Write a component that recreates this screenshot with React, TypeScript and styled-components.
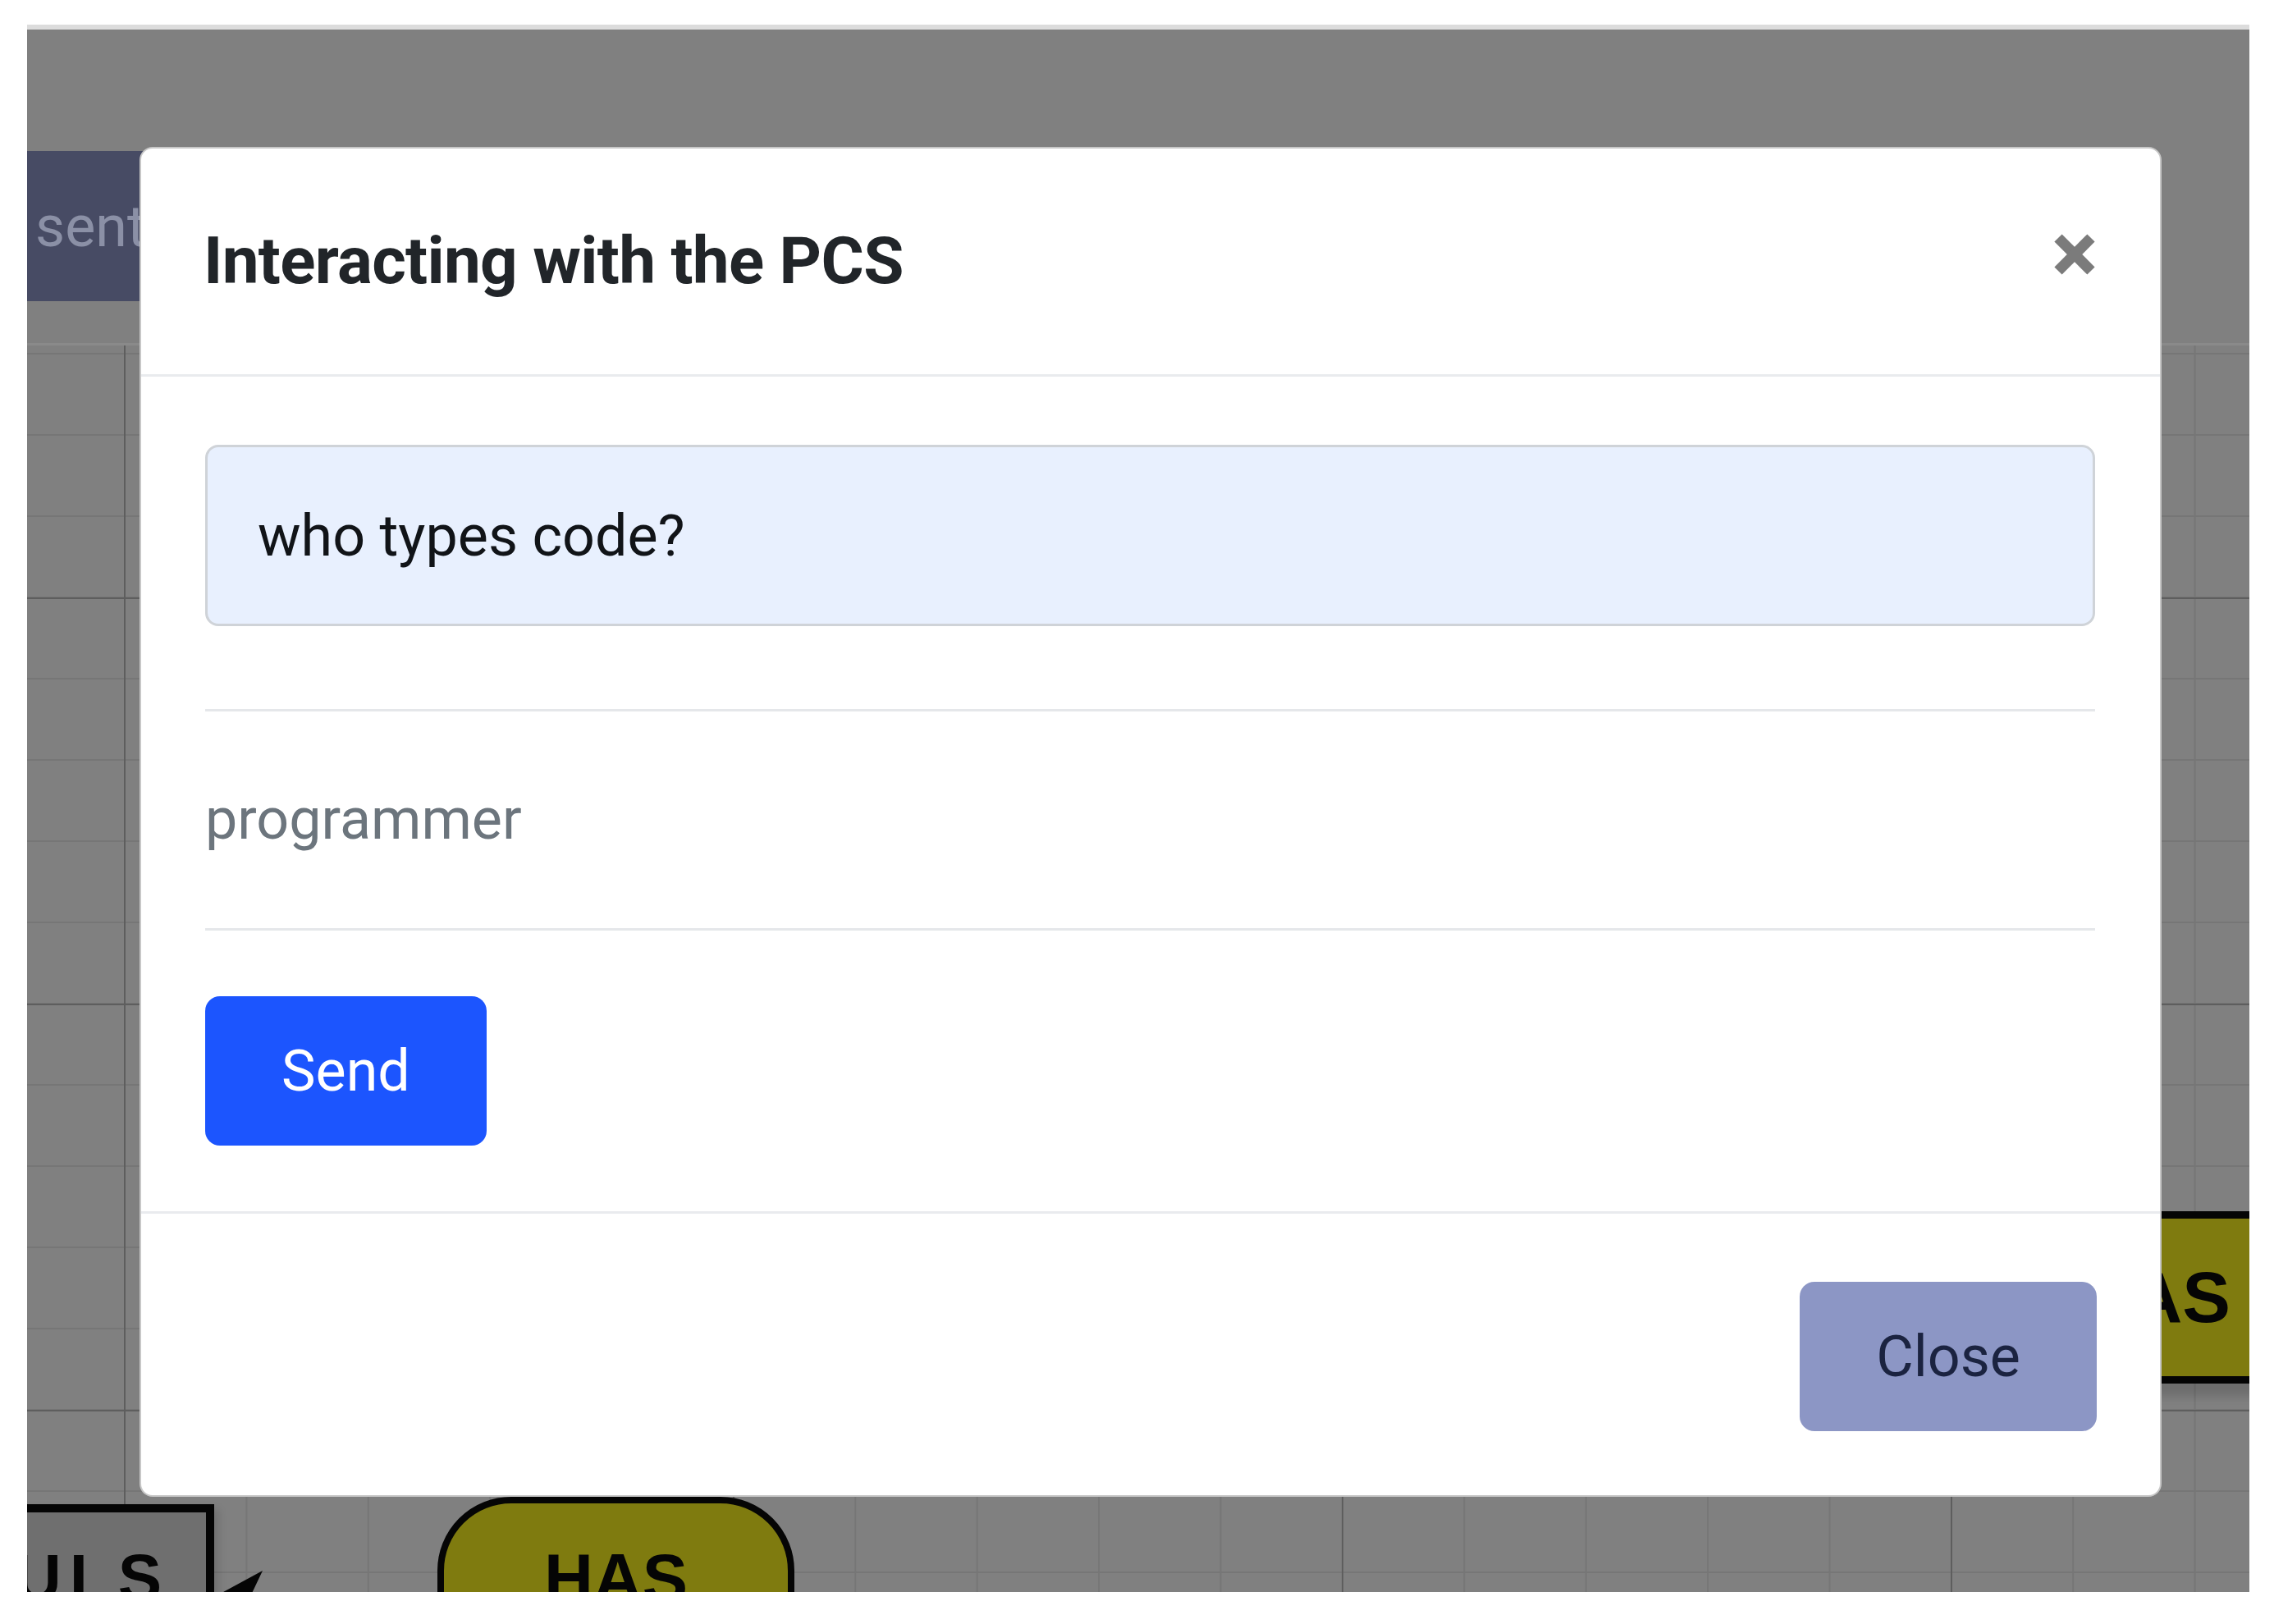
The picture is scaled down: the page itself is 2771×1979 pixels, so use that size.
import React from "react";
import styled, { createGlobalStyle } from "styled-components";

const GlobalStyle = createGlobalStyle`
  html, body {
    margin: 0;
    padding: 0;
    background: #ffffff;
  }
  body {
    font-family: Roboto, "Liberation Sans", Arial, sans-serif;
  }
  * { box-sizing: border-box; }
`;

const Page = styled.div`
  width: 2771px;
  height: 1979px;
  padding: 30px 30px 39px 33px;
`;

const Screen = styled.div`
  position: relative;
  width: 2708px;
  height: 1910px;
  background: #808080;
  border-top: 6px solid #dcdcdc;
  overflow: hidden;
  display: flex;
  flex-direction: column;
`;

const Toolbar = styled.div`
  height: 382px;
  flex: none;
  display: flex;
  align-items: flex-start;
  padding-top: 148px;
`;

const ToolButton = styled.div`
  width: 420px;
  height: 183px;
  background: #474b64;
  color: #8b90a6;
  font-family: Roboto, "Liberation Sans", sans-serif;
  font-size: 70px;
  display: flex;
  align-items: center;
  padding-left: 10px;
`;

const Canvas = styled.div`
  position: relative;
  flex: 1;
  border-top: 3px solid #8a8a8a;
  background-color: #808080;
  background-image:
    linear-gradient(to right, #5e5e5e 0 2px, transparent 2px),
    linear-gradient(to bottom, #5e5e5e 0 2px, transparent 2px),
    linear-gradient(to right, #767676 0 2px, transparent 2px),
    linear-gradient(to bottom, #767676 0 2px, transparent 2px);
  background-size: 742px 100%, 100% 495px, 148.4px 100%, 100% 99px;
  background-position: 118px 0, 0 307px, 118px 0, 0 9px;
`;

const BoxNode = styled.div<{ $fill: string }>`
  position: absolute;
  background: ${(p) => p.$fill};
  border: 10px solid #050505;
  color: #050505;
  font-family: "Liberation Sans", Arial, sans-serif;
  font-weight: 700;
  line-height: 1;
  display: flex;
  white-space: nowrap;
`;

const UlsNode = styled(BoxNode)`
  left: -150px;
  top: 1412px;
  width: 378px;
  height: 220px;
  justify-content: flex-end;
  padding: 40px 44px 0 0;
  font-size: 80px;
  letter-spacing: 10px;
  box-shadow: 6px 6px 10px rgba(0, 0, 0, 0.12);
`;

const HasOval = styled(BoxNode)`
  left: 500px;
  top: 1403px;
  width: 435px;
  height: 240px;
  border-width: 8px;
  border-radius: 90px;
  justify-content: center;
  padding-top: 50px;
  font-size: 83px;
`;

const HasBox = styled(BoxNode)`
  left: 2407px;
  top: 1055px;
  width: 370px;
  height: 210px;
  border-width: 9px;
  justify-content: center;
  align-items: center;
  font-size: 88px;
  box-shadow: 0 20px 10px -4px rgba(0, 0, 0, 0.14);
`;

const EdgeSvg = styled.svg`
  position: absolute;
  left: 167px;
  top: 1460px;
  overflow: visible;
`;

const Overlay = styled.div`
  position: absolute;
  inset: 0;
  z-index: 10;
  padding: 143px 0 0 137px;
`;

const Dialog = styled.div`
  width: 2464px;
  background: #ffffff;
  border: 2px solid rgba(0, 0, 0, 0.22);
  border-radius: 16px;
  display: flex;
  flex-direction: column;
  font-family: Roboto, "Liberation Sans", sans-serif;
`;

const Header = styled.div`
  display: flex;
  justify-content: space-between;
  align-items: flex-start;
  padding: 77px 79px 78px 76px;
  border-bottom: 3px solid #e9ebee;
`;

const Title = styled.h5`
  margin: 0;
  font-size: 80px;
  line-height: 120px;
  font-weight: 700;
  letter-spacing: -0.7px;
  color: #212529;
`;

const CloseX = styled.button`
  margin-top: 27px;
  width: 50px;
  height: 50px;
  padding: 0;
  border: none;
  background: none;
  display: flex;
`;

const Body = styled.div`
  display: flex;
  flex-direction: column;
  align-items: flex-start;
  padding: 83px 79px 80px 78px;
`;

const QueryInput = styled.div`
  width: 100%;
  height: 221px;
  border: 3px solid #cfd3d8;
  border-radius: 16px;
  background: #e8f0fe;
  color: #111418;
  font-size: 70px;
  display: flex;
  align-items: center;
  padding-left: 61px;
`;

const Rule = styled.div<{ $top: number }>`
  width: 100%;
  height: 3px;
  background: #e5e7ea;
  margin-top: ${(p) => p.$top}px;
`;

const Answer = styled.div`
  font-size: 70px;
  line-height: 105px;
  color: #6c757d;
  margin: 79px 0 80px;
`;

const Button = styled.button<{ $bg: string; $fg: string }>`
  height: 182px;
  padding: 0 93px;
  border: none;
  border-radius: 18px;
  background: ${(p) => p.$bg};
  color: ${(p) => p.$fg};
  font-family: Roboto, "Liberation Sans", sans-serif;
  font-size: 70px;
  font-weight: 400;
  line-height: 182px;
`;

const SendButton = styled(Button)`
  margin-top: 80px;
`;

const Footer = styled.div`
  display: flex;
  justify-content: flex-end;
  padding: 83px 77px 78px 78px;
  border-top: 3px solid #e9ebee;
`;

export default function App() {
  return (
    <>
      <GlobalStyle />
      <Page>
        <Screen>
          <Toolbar>
            <ToolButton>sent</ToolButton>
          </Toolbar>
          <Canvas>
            <UlsNode $fill="#6f6f6f">ULS</UlsNode>
            <EdgeSvg width="360" height="120" viewBox="0 0 360 120">
              <line x1="100" y1="71" x2="335" y2="71" stroke="#050505" strokeWidth="8" />
              <polygon points="50,71 120,33 102,71 120,109" fill="#050505" />
            </EdgeSvg>
            <HasOval $fill="#7f7b0f">HAS</HasOval>
            <HasBox $fill="#7f7b0f">HAS</HasBox>
          </Canvas>
          <Overlay>
            <Dialog>
              <Header>
                <Title>Interacting with the PCS</Title>
                <CloseX aria-label="Close">
                  <svg width="50" height="50" viewBox="0 0 50 50">
                    <line x1="5" y1="5" x2="45" y2="45" stroke="#7b7b7b" strokeWidth="13" />
                    <line x1="45" y1="5" x2="5" y2="45" stroke="#7b7b7b" strokeWidth="13" />
                  </svg>
                </CloseX>
              </Header>
              <Body>
                <QueryInput>who types code?</QueryInput>
                <Rule $top={101} />
                <Answer>programmer</Answer>
                <Rule $top={0} />
                <SendButton $bg="#1c55fe" $fg="#ffffff">Send</SendButton>
              </Body>
              <Footer>
                <Button $bg="#8c96c5" $fg="#1b2340">Close</Button>
              </Footer>
            </Dialog>
          </Overlay>
        </Screen>
      </Page>
    </>
  );
}
